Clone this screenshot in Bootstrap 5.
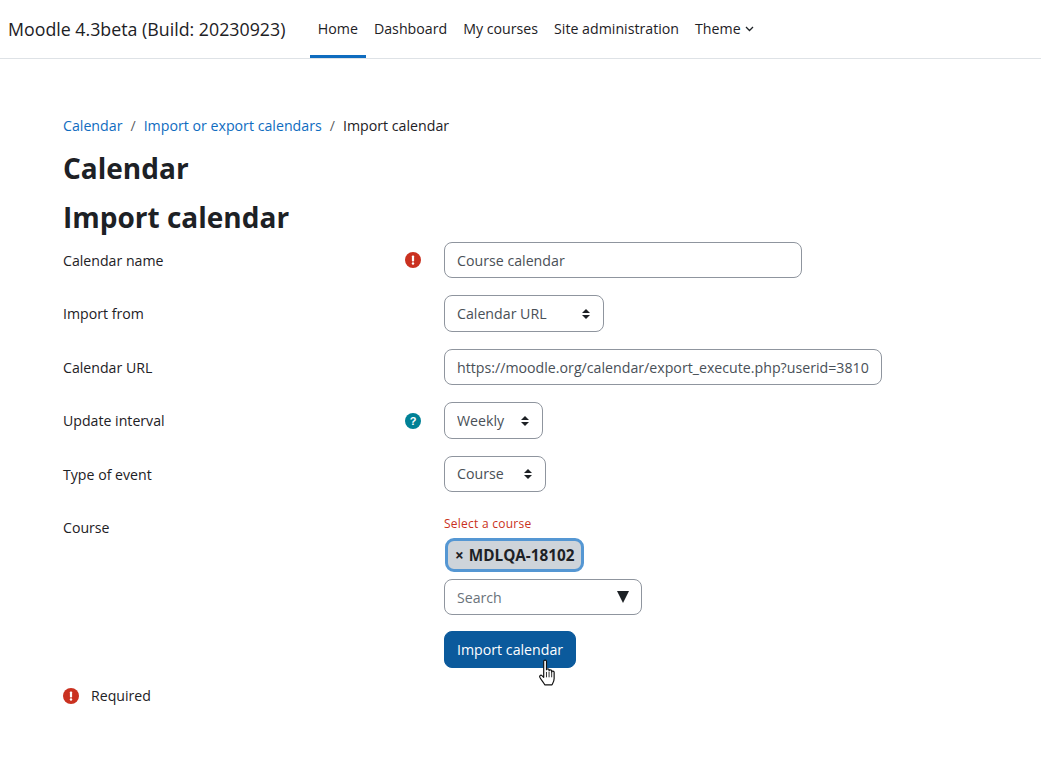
<!DOCTYPE html>
<html lang="en"><head><meta charset="utf-8"><title>Import calendar</title>
<link href="https://cdn.jsdelivr.net/npm/bootstrap@5.3.0/dist/css/bootstrap.min.css" rel="stylesheet">
<style>
body{font-family:"Open Sans","Noto Sans",sans-serif;font-size:14.15px;color:#1d2125;background:#fff;height:764px;overflow:hidden}
.topbar{height:59px;border-bottom:1px solid #dee2e6;padding:0 8px}
.brandname{font-size:17.8px;color:#1d2125;margin-right:24.400px;text-decoration:none;white-space:nowrap}
.toplink{display:flex;align-items:center;height:58px;padding:0 8px;color:#1d2125;text-decoration:none;font-size:14.2px;border-bottom:3px solid transparent;border-top:3px solid transparent;white-space:nowrap}
.toplink.current{border-bottom-color:#0f6cbf}
.pagewrap{padding:56px 0 0 63px}
.crumbs{font-size:14.2px;margin:0;height:17px;--bs-breadcrumb-margin-bottom:0;--bs-breadcrumb-item-padding-x:8px;align-items:center}
.crumbs a{color:#0f6cbf;text-decoration:none}
.crumbs .breadcrumb-item.active{color:#1d2125}
.pagetitle{font-size:28px;font-weight:700;margin:0;line-height:34px;color:#1d2125}
.t1{margin-top:19px}.t2{margin-top:15px;margin-bottom:7.9px}
.frow{display:flex;min-height:37px;margin-bottom:16.5px}
.flabel{width:339px;padding-top:8px;line-height:22px}
.ficon{width:42px;padding-top:6px;padding-left:3px}
.fctl{flex:none}
.fld,.pick{border:1px solid #8f959e;border-radius:8px;height:36px;color:#495057;font-size:14.2px;padding:1px 12px 0;background-color:#fff;box-shadow:none}
.fld{display:block}
.pick{height:36.5px;appearance:none;padding:0 26px 0 12px;background-image:url("data:image/svg+xml,%3Csvg xmlns='http://www.w3.org/2000/svg' width='8' height='10'%3E%3Cpath d='M0 4l4-4 4 4zM0 6l4 4 4-4z' fill='%231d2125'/%3E%3C/svg%3E");background-repeat:no-repeat;background-position:right 13px center;background-size:8px 10px}
.w-name{width:358px}.w-from{width:160px}.w-url{width:438px}.w-int{width:99px}.w-type{width:102px}
.errtext{font-size:12px;color:#ca3120;line-height:16px;margin-top:6.500px;letter-spacing:.25px}
.chip{display:inline-flex;align-items:center;background:#ced4da;border:3px solid #5597d3;border-radius:9px;height:34px;padding:0 6.500px 0 7px;margin:6.500px 0 7px 1px;font-weight:700;font-size:15.3px;color:#1d2125;gap:5px}
.searchbox{width:198px;height:36px;border:1px solid #8f959e;border-radius:8px;color:#6a737b;padding:0 12px;position:relative;display:flex;align-items:center;justify-content:space-between}
.tri{width:0;height:0;border-left:6.5px solid transparent;border-right:6.5px solid transparent;border-top:12px solid #1d2125;margin-right:0}
.gobtn{--bs-btn-bg:#0b5a9c;--bs-btn-border-color:#0b5a9c;--bs-btn-color:#fff;--bs-btn-hover-bg:#0b5a9c;--bs-btn-hover-color:#fff;--bs-btn-border-radius:8px;--bs-btn-font-size:14.2px;--bs-btn-padding-x:12px;height:37px;padding-top:0;padding-bottom:0;margin-top:16px;display:block}
.handwrap{position:absolute;left:537.5px;top:659px}
.reqline{margin-top:16.5px;gap:12px}
</style></head><body>
<nav class="topbar d-flex align-items-center">
<a class="brandname" href="#">Moodle 4.3beta (Build: 20230923)</a>
<a class="toplink current" href="#">Home</a>
<a class="toplink" href="#">Dashboard</a>
<a class="toplink" href="#">My courses</a>
<a class="toplink" href="#">Site administration</a>
<a class="toplink gap-1" href="#">Theme <svg width="9" height="6" viewBox="0 0 9 6"><path d="M1 1l3.5 3.5L8 1" fill="none" stroke="#1d2125" stroke-width="1.3"/></svg></a>
</nav>
<main class="pagewrap">
<ol class="breadcrumb crumbs">
<li class="breadcrumb-item"><a href="#">Calendar</a></li>
<li class="breadcrumb-item"><a href="#">Import or export calendars</a></li>
<li class="breadcrumb-item active">Import calendar</li>
</ol>
<h2 class="pagetitle t1">Calendar</h2>
<h2 class="pagetitle t2">Import calendar</h2>
<div class="frow"><div class="flabel">Calendar name</div><div class="ficon"><svg width="16" height="16" viewBox="0 0 16 16"><circle cx="8" cy="8" r="8" fill="#ca3120"/><rect x="6.9" y="3.5" width="2.2" height="6" rx=".8" fill="#fff"/><circle cx="8" cy="11.5" r="1.2" fill="#fff"/></svg></div><div class="fctl"><input class="form-control fld w-name" value="Course calendar"></div></div>
<div class="frow"><div class="flabel">Import from</div><div class="ficon"></div><div class="fctl"><select class="form-select pick w-from"><option>Calendar URL</option></select></div></div>
<div class="frow"><div class="flabel">Calendar URL</div><div class="ficon"></div><div class="fctl"><input class="form-control fld w-url" value="https://moodle.org/calendar/export_execute.php?userid=3810"></div></div>
<div class="frow"><div class="flabel">Update interval</div><div class="ficon"><svg width="16" height="16" viewBox="0 0 16 16"><circle cx="8" cy="8" r="8" fill="#008196"/><text x="8" y="12" text-anchor="middle" font-family="Liberation Sans" font-weight="700" font-size="11" fill="#fff">?</text></svg></div><div class="fctl"><select class="form-select pick w-int"><option>Weekly</option></select></div></div>
<div class="frow"><div class="flabel">Type of event</div><div class="ficon"></div><div class="fctl"><select class="form-select pick w-type"><option>Course</option></select></div></div>
<div class="frow mb-0"><div class="flabel">Course</div><div class="ficon"></div><div class="fctl">
<div class="errtext">Select a course</div>
<div class="chip"><span>×</span><span>MDLQA-18102</span></div>
<div class="searchbox"><span>Search</span><span class="tri"></span></div>
<button class="btn gobtn">Import calendar</button>
</div></div>
<div class="d-flex align-items-center reqline"><svg width="16" height="16" viewBox="0 0 16 16"><circle cx="8" cy="8" r="8" fill="#ca3120"/><rect x="6.9" y="3.5" width="2.2" height="6" rx=".8" fill="#fff"/><circle cx="8" cy="11.5" r="1.2" fill="#fff"/></svg><span>Required</span></div>
</main>
<svg class="handwrap" width="20" height="28" viewBox="0 0 18 26"><path d="M5 2.2c0-1.600 2.600-1.600 2.600 0V10c0-1.200 2.400-1.200 2.400 0v1c0-1.200 2.400-1.200 2.400 0v1c0-1.100 2.300-1.100 2.300.2V18c0 3-1.200 4.500-2 6H6c-1-2-3-4-4.600-7-.7-1.400.9-2.600 2-1.500L5 17z" fill="#fff" stroke="#111" stroke-width="1.100" stroke-linejoin="round"/><path d="M7.600 12v5M10 12v5M12.400 12v5" stroke="#111" stroke-width=".8"/></svg>
</body></html>
